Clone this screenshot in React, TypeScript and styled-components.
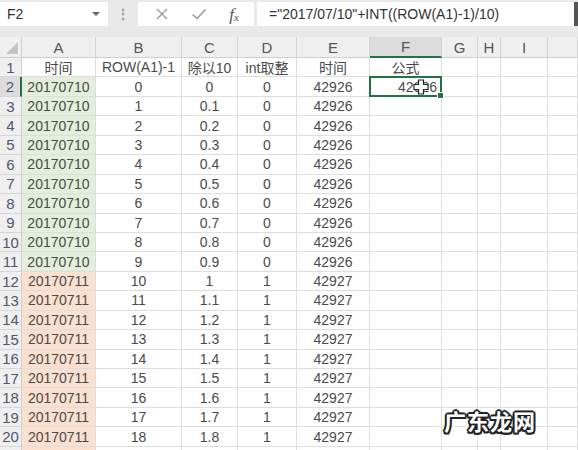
import { createGlobalStyle, styled } from "styled-components";

const GlobalStyle = createGlobalStyle`
  html, body {
    margin: 0;
    padding: 0;
    background: #ffffff;
  }
  body {
    font-family: "Liberation Sans", "Noto Sans CJK SC", sans-serif;
    color: #444;
  }
`;

const COLS = ["A", "B", "C", "D", "E", "F", "G", "H", "I", ""];
const HEADERS = ["时间", "ROW(A1)-1", "除以10", "int取整", "时间", "公式"];

type Row = { a: string; b: string; c: string; d: string; e: string; f: string; tone: "green" | "orange" };

const rows: Row[] = Array.from({ length: 20 }, (_, i) => {
  const d = Math.floor(i / 10);
  return {
    a: d === 0 ? "20170710" : "20170711",
    b: String(i),
    c: String(i / 10),
    d: String(d),
    e: String(42926 + d),
    f: i === 0 ? "42926" : "",
    tone: d === 0 ? "green" : "orange",
  };
});

export default function App() {
  return (
    <Page>
      <GlobalStyle />
      <FormulaBar>
        <NameBox>
          <span>F2</span>
          <Caret />
        </NameBox>
        <Grip>⋮</Grip>
        <ButtonBox>
          <svg width="14" height="14" viewBox="0 0 14 14">
            <path d="M2 2 L12 12 M12 2 L2 12" stroke="#9a9a9a" strokeWidth="1.4" fill="none" />
          </svg>
          <svg width="16" height="14" viewBox="0 0 16 14">
            <path d="M1.5 7.5 L6 11.5 L14.5 2.5" stroke="#9a9a9a" strokeWidth="1.6" fill="none" />
          </svg>
          <Fx>
            f<sub>x</sub>
          </Fx>
        </ButtonBox>
        <FormulaInput>="2017/07/10"+INT((ROW(A1)-1)/10)</FormulaInput>
      </FormulaBar>
      <Gap />
      <Sheet>
        <Corner>
          <svg width="12" height="12" viewBox="0 0 12 12">
            <path d="M12 0 L12 12 L0 12 Z" fill="#c4c4c4" />
          </svg>
        </Corner>
        {COLS.map((c, i) => (
          <ColHead key={i} $active={c === "F"}>
            {c}
          </ColHead>
        ))}

        <RowHead>1</RowHead>
        {HEADERS.map((h, i) => (
          <Cell key={i} $align="center">
            {h}
          </Cell>
        ))}
        <Cell />
        <Cell />
        <Cell />
        <Cell />

        {rows.map((r, i) => (
          <RowGroup key={i} r={r} n={i + 2} />
        ))}
      </Sheet>
      <Pointer>
        <svg width="16" height="16" viewBox="0 0 16 16">
          <path
            d="M5.5 1 H10.5 V5.5 H15 V10.5 H10.5 V15 H5.5 V10.5 H1 V5.5 H5.5 Z"
            fill="#fff"
            stroke="#222"
            strokeWidth="1.2"
          />
        </svg>
      </Pointer>
      <Watermark>广东龙网</Watermark>
    </Page>
  );
}

function RowGroup({ r, n }: { r: Row; n: number }) {
  const selected = n === 2;
  return (
    <>
      <RowHead $active={selected}>{n}</RowHead>
      <Cell $align="center" $tone={r.tone}>
        {r.a}
      </Cell>
      <Cell $align="center">{r.b}</Cell>
      <Cell $align="center">{r.c}</Cell>
      <Cell $align="center">{r.d}</Cell>
      <Cell $align="center">{r.e}</Cell>
      {selected ? (
        <Selected>
          {r.f}
          <Handle />
        </Selected>
      ) : (
        <Cell />
      )}
      <Cell />
      <Cell />
      <Cell />
      <Cell />
    </>
  );
}

const Page = styled.div`
  position: relative;
  width: 578px;
  height: 450px;
  overflow: hidden;
  background: #e9e9e9;
`;

const FormulaBar = styled.div`
  display: flex;
  align-items: stretch;
  height: 24px;
  padding-top: 2px;
  background: #e9e9e9;
`;

const NameBox = styled.div`
  display: flex;
  align-items: center;
  justify-content: space-between;
  width: 108px;
  padding: 0 8px 0 7px;
  box-sizing: border-box;
  background: #fff;
  font-size: 14px;
  color: #333;
`;

const Caret = styled.span`
  width: 0;
  height: 0;
  border-left: 4px solid transparent;
  border-right: 4px solid transparent;
  border-top: 4px solid #666;
`;

const Grip = styled.div`
  width: 30px;
  display: flex;
  align-items: center;
  justify-content: center;
  color: #9a9a9a;
  font-size: 14px;
  font-weight: bold;
`;

const ButtonBox = styled.div`
  display: flex;
  align-items: center;
  justify-content: space-around;
  width: 116px;
  margin-right: 3px;
  padding: 0 4px 0 6px;
  box-sizing: border-box;
  background: #fff;
`;

const Fx = styled.span`
  font-family: "Liberation Serif", serif;
  font-style: italic;
  font-size: 17px;
  color: #555;
  line-height: 1;

  sub {
    font-size: 11px;
    vertical-align: -1px;
  }
`;

const FormulaInput = styled.div`
  flex: 1;
  display: flex;
  align-items: center;
  padding-left: 12px;
  background: #fff;
  font-size: 14px;
  color: #333;
  border-right: 4px solid #555;
`;

const Gap = styled.div`
  height: 11px;
`;

const Sheet = styled.div`
  display: grid;
  grid-template-columns: 22px 74px 86px 56px 59px 73px 72px 36px 23px 47px 30px;
  grid-template-rows: 21px;
  grid-auto-rows: 19.44px;
  background: #fff;
  font-size: 14px;
`;

const Corner = styled.div`
  display: flex;
  align-items: flex-end;
  justify-content: flex-end;
  padding: 0 3px 3px 0;
  background: #efefef;
  border-right: 1px solid #d0d0d0;
  border-bottom: 1px solid #cfcfcf;
`;

const ColHead = styled.div<{ $active?: boolean }>`
  display: flex;
  align-items: center;
  justify-content: center;
  background: ${(p) => (p.$active ? "#dcdcdc" : "#efefef")};
  border-right: 1px solid #d4d4d4;
  border-bottom: ${(p) => (p.$active ? "2px solid #217346" : "1px solid #cfcfcf")};
  font-size: 15px;
  color: #555;
  box-sizing: border-box;
`;

const RowHead = styled.div<{ $active?: boolean }>`
  display: flex;
  align-items: center;
  justify-content: center;
  background: ${(p) => (p.$active ? "#dcdcdc" : "#efefef")};
  border-right: ${(p) => (p.$active ? "2px solid #217346" : "1px solid #cfcfcf")};
  border-bottom: 1px solid #d6d6d6;
  font-size: 15px;
  color: #55556a;
  box-sizing: border-box;
  overflow: hidden;
`;

const toneBg = { green: "#e3efda", orange: "#fbe0d0" };

const Cell = styled.div<{ $align?: "center" | "right"; $tone?: "green" | "orange" }>`
  display: flex;
  align-items: center;
  justify-content: ${(p) => (p.$align === "right" ? "flex-end" : "center")};
  padding: 0 3px;
  background: ${(p) => (p.$tone ? toneBg[p.$tone] : "#fff")};
  border-right: 1px solid #dedede;
  border-bottom: 1px solid #dedede;
  color: #4a4a4a;
  white-space: nowrap;
  box-sizing: border-box;
  overflow: visible;
`;

const Selected = styled.div`
  position: relative;
  display: flex;
  align-items: center;
  justify-content: flex-end;
  padding-right: 3px;
  margin: -1px 0 0 -1px;
  border: 2px solid #217346;
  color: #4a4a4a;
  background: #fff;
  z-index: 1;
`;

const Handle = styled.span`
  position: absolute;
  right: -4px;
  bottom: -4px;
  width: 5px;
  height: 5px;
  background: #217346;
  border: 1px solid #fff;
`;

const Pointer = styled.div`
  position: absolute;
  left: 413px;
  top: 79px;
  z-index: 2;
  line-height: 0;
`;

const Watermark = styled.div`
  position: absolute;
  left: 444px;
  top: 404px;
  font-family: "Noto Sans CJK SC", sans-serif;
  font-weight: 700;
  font-size: 22px;
  letter-spacing: 1px;
  color: #fff;
  text-shadow:
    -2px 0 0 #222, 2px 0 0 #222, 0 -2px 0 #222, 0 2px 0 #222,
    -1.5px -1.5px 0 #222, 1.5px -1.5px 0 #222, -1.5px 1.5px 0 #222, 1.5px 1.5px 0 #222,
    0 0 3px #888;
  z-index: 3;
`;
